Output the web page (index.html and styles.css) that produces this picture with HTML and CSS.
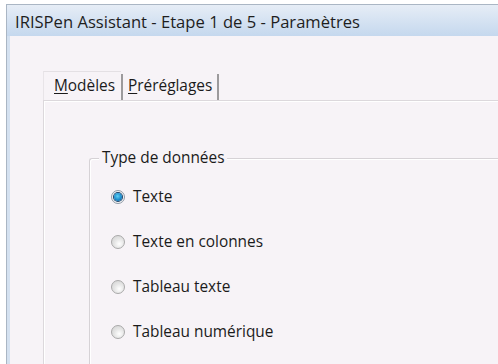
FILE: index.html
```html
<!DOCTYPE html>
<html lang="fr">
<head>
<meta charset="utf-8">
<title>IRISPen Assistant</title>
<link rel="stylesheet" href="styles.css">
</head>
<body>
<div class="window">
  <div class="titlebar">IRISPen Assistant - Etape 1 de 5 - Paramètres</div>
  <div class="frame">
    <div class="client">
      <div class="tabs">
        <div class="tab active"><span class="ul">M</span>odèles</div>
        <div class="tab"><span class="ul">P</span>réréglages</div>
      </div>
      <div class="panel">
        <div class="group">
          <div class="legend">Type de données</div>
          <div class="row"><span class="radio checked"><span class="dot"></span></span><span class="label">Texte</span></div>
          <div class="row"><span class="radio"></span><span class="label">Texte en colonnes</span></div>
          <div class="row"><span class="radio"></span><span class="label">Tableau texte</span></div>
          <div class="row"><span class="radio"></span><span class="label">Tableau numérique</span></div>
        </div>
      </div>
    </div>
  </div>
</div>
</body>
</html>
```

FILE: styles.css
```css
html, body {
  margin: 0;
  padding: 0;
  background: #ffffff;
  overflow: hidden;
}
body {
  font-family: "Open Sans", "Noto Sans", sans-serif;
  font-size: 15.4px;
  color: #1b1b1b;
}
.window {
  box-sizing: border-box;
  margin: 4px 0 0 6px;
  border-top: 1px solid #aab6c4;
  border-left: 1px solid #aab6c4;
  height: 360px;
  display: flex;
  flex-direction: column;
}
.titlebar {
  height: 31px;
  line-height: 33px;
  padding-left: 8px;
  font-size: 16.6px;
  background: linear-gradient(#e6edf6, #c5d8ee);
  color: #1e1e1e;
  white-space: nowrap;
  overflow: hidden;
}
.frame {
  flex: 1;
  border-left: 3px solid #d4e1f0;
  display: flex;
  min-height: 0;
}
.client {
  flex: 1;
  background: #f7f3f7;
  padding: 35px 0 0 33px;
  display: flex;
  flex-direction: column;
  min-height: 0;
}
.tabs {
  display: flex;
  height: 29px;
}
.tab {
  box-sizing: border-box;
  height: 29px;
  line-height: 27px;
  white-space: nowrap;
}
.tab.active {
  width: 78px;
  padding-left: 10px;
  border-top: 1px solid #e4e0e4;
  border-left: 1px solid #e8e4e8;
  background: #f7f3f7;
}
.tab:not(.active) {
  width: 98px;
  margin-top: 3px;
  height: 26px;
  line-height: 24px;
  padding-left: 5px;
  border-left: 2px solid #9c9a9c;
  border-right: 2px solid #9c9a9c;
}
.ul {
  text-decoration: underline;
  text-underline-offset: 2px;
}
.panel {
  flex: 1;
  border-top: 1px solid #dcd8dc;
  border-left: 1px solid #dcd8dc;
  box-shadow: inset 1px 1px 0 #ffffff;
  padding: 57px 0 0 45px;
  display: flex;
  flex-direction: column;
  min-height: 0;
}
.group {
  flex: 1;
  position: relative;
  border-top: 1px solid #d6d2d6;
  border-left: 1px solid #d6d2d6;
  border-top-left-radius: 3px;
  box-shadow: inset 1px 1px 0 #ffffff;
  padding: 15px 0 0 21px;
}
.legend {
  position: absolute;
  top: -11px;
  left: 9px;
  padding: 0 3px;
  background: #f7f3f7;
  line-height: 20px;
}
.row {
  display: flex;
  align-items: center;
  height: 45px;
}
.radio {
  box-sizing: border-box;
  width: 14px;
  height: 14px;
  border-radius: 50%;
  border: 1px solid #a9a9a9;
  background: radial-gradient(circle at 60% 65%, #ffffff 0%, #e6e6e6 45%, #cfcfcf 100%);
  display: flex;
  align-items: center;
  justify-content: center;
  margin-right: 8px;
}
.radio.checked {
  border-color: #8f9aa6;
  background: radial-gradient(circle, #ffffff 55%, #d2d6da 100%);
}
.dot {
  width: 8px;
  height: 8px;
  border-radius: 50%;
  background: radial-gradient(circle at 45% 40%, #5fd0f5 0%, #1b8ccc 55%, #0d4f86 100%);
  box-shadow: 0 0 0 1px #1d3f66;
}
.label {
  line-height: 20px;
  white-space: nowrap;
}
```
